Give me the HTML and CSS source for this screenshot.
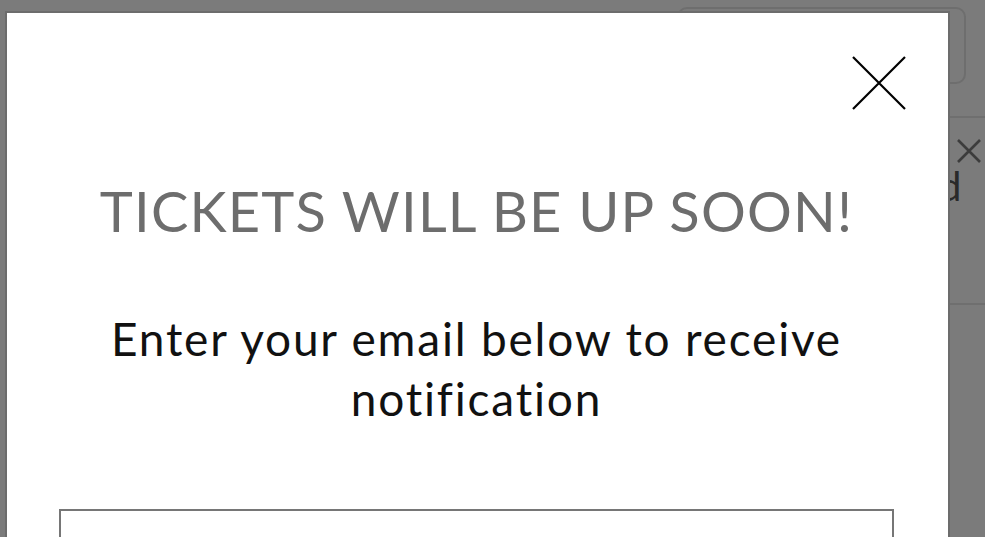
FILE: index.html
```html
<!DOCTYPE html>
<html lang="en">
<head>
<meta charset="utf-8">
<title>Tickets will be up soon</title>
<link rel="stylesheet" href="styles.css">
</head>
<body>
<div class="page">
  <div class="page-button"></div>
  <div class="page-strip">
    <div class="strip-line strip-line-top"></div>
    <svg class="strip-close" width="26" height="26" viewBox="0 0 26 26"><path d="M2 2 L24 24 M24 2 L2 24" stroke="#3c3c3c" stroke-width="2.6" fill="none"/></svg>
    <div class="strip-text">d</div>
    <div class="strip-line strip-line-bottom"></div>
  </div>
</div>
<div class="modal">
  <button class="modal-close" aria-label="Close">
    <svg width="54" height="54" viewBox="0 0 54 54"><path d="M1 1 L53 53 M53 1 L1 53" stroke="#000" stroke-width="2.2" fill="none"/></svg>
  </button>
  <h1 class="modal-title">TICKETS WILL BE UP SOON!</h1>
  <p class="modal-text">Enter your email below to receive notification</p>
  <div class="modal-input"></div>
</div>
</body>
</html>
```
FILE: styles.css
```css
html, body {
  margin: 0;
  padding: 0;
  height: 100%;
  overflow: hidden;
}
body {
  background: #7b7b7b;
  font-family: Lato, "Open Sans", sans-serif;
  font-variant-ligatures: none;
}
.page {
  position: relative;
  height: 100%;
}
.page-button {
  position: absolute;
  left: 677px;
  top: 7px;
  width: 285px;
  height: 73px;
  border: 2px solid #6e6e6e;
  border-radius: 10px;
}
.page-strip {
  position: absolute;
  left: 949px;
  top: 0;
  right: 0;
  bottom: 0;
}
.strip-line {
  position: absolute;
  left: 0;
  right: 0;
  height: 2px;
  background: #6f6f6f;
}
.strip-line-top { top: 116px; }
.strip-line-bottom { top: 303px; }
.strip-close {
  position: absolute;
  left: 7px;
  top: 138px;
  display: block;
}
.strip-text {
  position: absolute;
  left: -10px;
  top: 166px;
  font-size: 40px;
  line-height: 1;
  color: #2a2a2a;
}
.modal {
  position: absolute;
  left: 5px;
  top: 11px;
  bottom: 0;
  width: 945px;
  background: #fff;
  border: 2px solid #6c6c6c;
  border-bottom: 0;
  display: flex;
  flex-direction: column;
  align-items: center;
  padding: 0 54px 0 52px;
  box-sizing: border-box;
  overflow: hidden;
}
.modal-close {
  position: absolute;
  top: 43px;
  right: 42px;
  padding: 0;
  border: 0;
  background: none;
  width: 54px;
  height: 54px;
}
.modal-close svg { display: block; }
.modal-title {
  margin: 166px 0 0;
  font-size: 56px;
  font-weight: 400;
  line-height: 64px;
  color: #6d6d6d;
  text-align: center;
  letter-spacing: 1.2px;
}
.modal-text {
  margin: 66px 0 0;
  font-size: 46px;
  line-height: 60px;
  color: #111;
  text-align: center;
  letter-spacing: 1.8px;
  max-width: 800px;
}
.modal-input {
  margin-top: 80px;
  align-self: stretch;
  flex-shrink: 0;
  height: 60px;
  border: 2px solid #767676;
}
```
